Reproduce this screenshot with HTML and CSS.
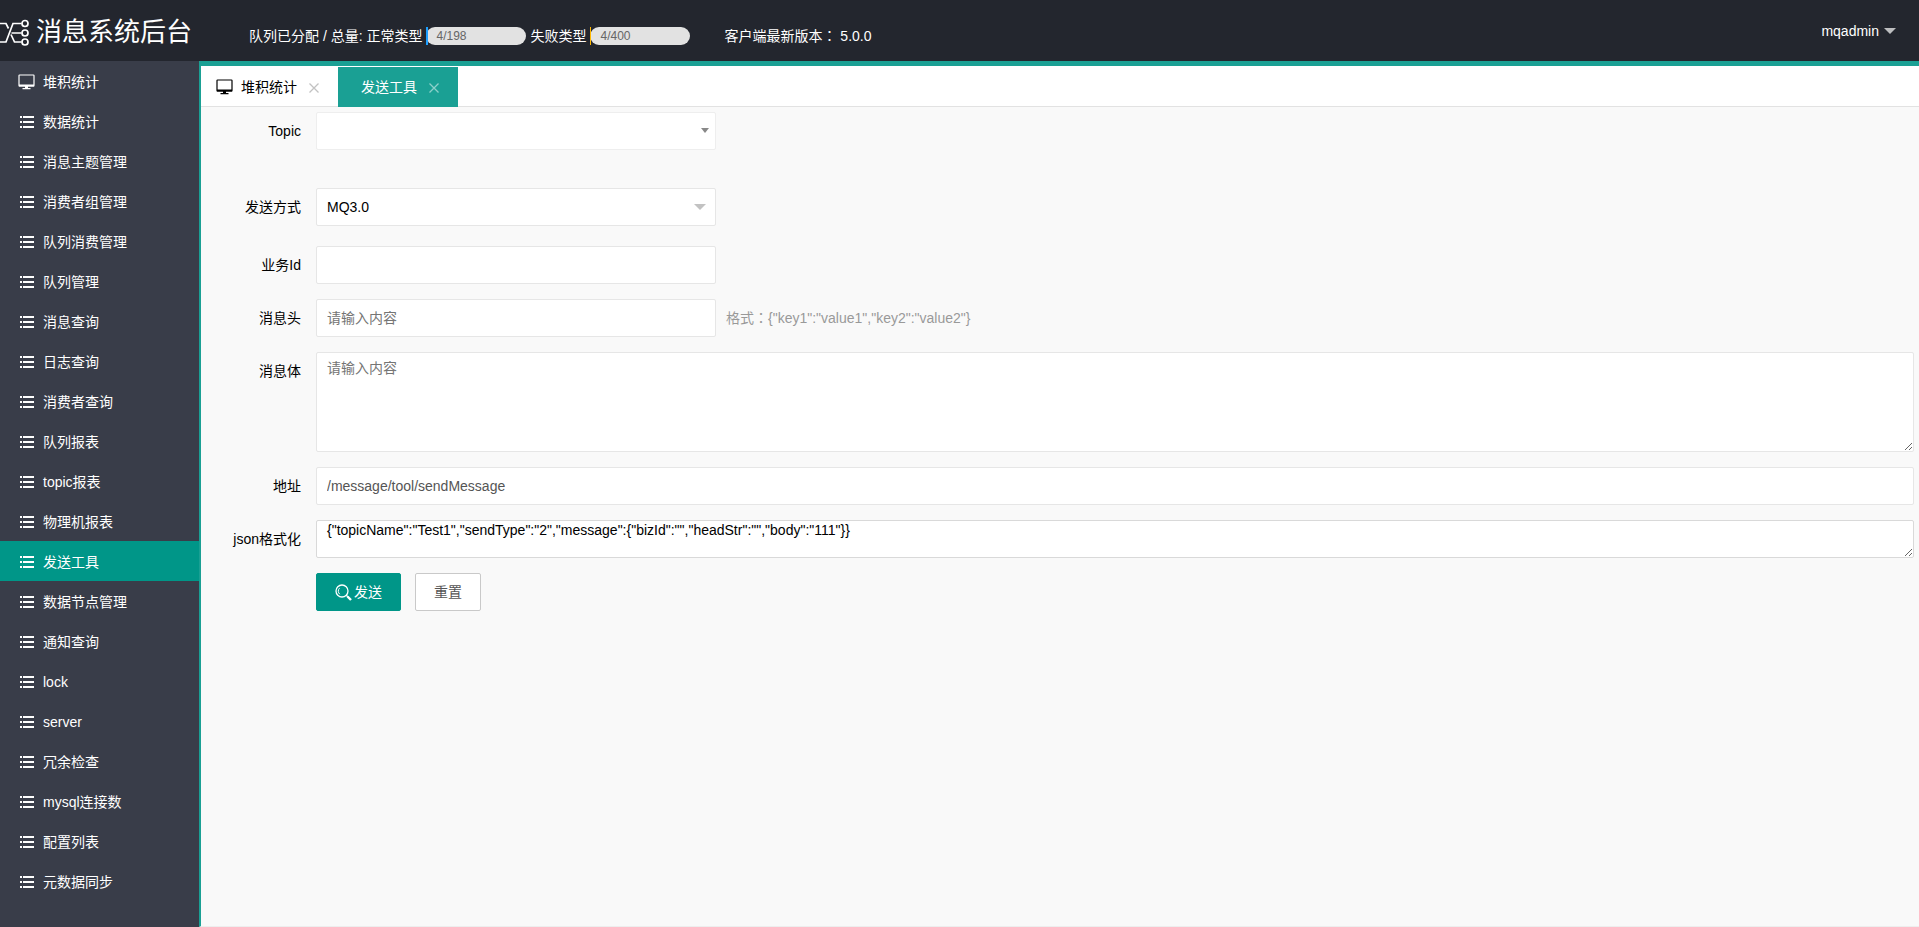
FILE: index.html
```
<!DOCTYPE html>
<html lang="zh-CN">
<head>
<meta charset="utf-8">
<title>消息系统后台</title>
<link rel="stylesheet" href="styles.css">
</head>
<body>
<svg class="sprite" aria-hidden="true">
  <symbol id="i-list" viewBox="0 0 14 12">
    <path d="M0 0h2v2H0zM3 0h11v2H3zM0 5h2v2H0zM3 5h11v2H3zM0 10h2v2H0zM3 10h11v2H3z" fill="currentColor"/>
  </symbol>
  <symbol id="i-monitor" viewBox="0 0 17 16">
    <rect x="1" y="1" width="15" height="11" rx=".6" fill="none" stroke="currentColor" stroke-width="1.200"/>
    <path d="M1 10.500h15v2H1zM7 12.500h3v1.500H7zM4.500 14h8v1.200h-8z" fill="currentColor"/>
  </symbol>
  <symbol id="i-close" viewBox="0 0 10 10">
    <path d="M.5.5l9 9M9.500.5l-9 9" fill="none" stroke="currentColor" stroke-width="1.300"/>
  </symbol>
</svg>

<header class="header">
  <div class="brand">
    <svg class="brand-mark" viewBox="0 0 30 28" aria-hidden="true">
      <g fill="none" stroke="currentColor" stroke-width="1.700">
        <path d="M0 4.500h6l2.500 5M11 15.500l3.500 7.500h7M0 23h6l7-18.500h8.500M11.500 14h10"/>
        <circle cx="25" cy="4.500" r="3"/><circle cx="25" cy="14" r="3"/><circle cx="25" cy="23" r="3"/>
      </g>
    </svg>
    <h1 class="brand-name">消息系统后台</h1>
  </div>
  <div class="stats">
    <span>队列已分配 / 总量: 正常类型</span>
    <div class="meter"><i class="meter-fill meter-blue" style="width:2%"></i><span class="meter-text">4/198</span></div>
    <span>失败类型</span>
    <div class="meter"><i class="meter-fill meter-amber" style="width:1%"></i><span class="meter-text">4/400</span></div>
    <span class="version">客户端最新版本<span class="colon" lang="zh-Hant">：</span> 5.0.0</span>
  </div>
  <button class="user" type="button">mqadmin<i class="caret caret-user"></i></button>
</header>

<div class="shell">
  <nav class="side">
    <a class="side-link" href="#"><svg class="ico-monitor"><use href="#i-monitor"/></svg>堆积统计</a>
    <a class="side-link" href="#"><svg class="ico-list"><use href="#i-list"/></svg>数据统计</a>
    <a class="side-link" href="#"><svg class="ico-list"><use href="#i-list"/></svg>消息主题管理</a>
    <a class="side-link" href="#"><svg class="ico-list"><use href="#i-list"/></svg>消费者组管理</a>
    <a class="side-link" href="#"><svg class="ico-list"><use href="#i-list"/></svg>队列消费管理</a>
    <a class="side-link" href="#"><svg class="ico-list"><use href="#i-list"/></svg>队列管理</a>
    <a class="side-link" href="#"><svg class="ico-list"><use href="#i-list"/></svg>消息查询</a>
    <a class="side-link" href="#"><svg class="ico-list"><use href="#i-list"/></svg>日志查询</a>
    <a class="side-link" href="#"><svg class="ico-list"><use href="#i-list"/></svg>消费者查询</a>
    <a class="side-link" href="#"><svg class="ico-list"><use href="#i-list"/></svg>队列报表</a>
    <a class="side-link" href="#"><svg class="ico-list"><use href="#i-list"/></svg>topic报表</a>
    <a class="side-link" href="#"><svg class="ico-list"><use href="#i-list"/></svg>物理机报表</a>
    <a class="side-link active" href="#" aria-current="page"><svg class="ico-list"><use href="#i-list"/></svg>发送工具</a>
    <a class="side-link" href="#"><svg class="ico-list"><use href="#i-list"/></svg>数据节点管理</a>
    <a class="side-link" href="#"><svg class="ico-list"><use href="#i-list"/></svg>通知查询</a>
    <a class="side-link" href="#"><svg class="ico-list"><use href="#i-list"/></svg>lock</a>
    <a class="side-link" href="#"><svg class="ico-list"><use href="#i-list"/></svg>server</a>
    <a class="side-link" href="#"><svg class="ico-list"><use href="#i-list"/></svg>冗余检查</a>
    <a class="side-link" href="#"><svg class="ico-list"><use href="#i-list"/></svg>mysql连接数</a>
    <a class="side-link" href="#"><svg class="ico-list"><use href="#i-list"/></svg>配置列表</a>
    <a class="side-link" href="#"><svg class="ico-list"><use href="#i-list"/></svg>元数据同步</a>
  </nav>

  <main class="main">
    <div class="tabs">
      <div class="tab tab-home"><svg class="ico-monitor"><use href="#i-monitor"/></svg><a class="tab-link" href="#">堆积统计</a><button class="tab-close" type="button" aria-label="关闭"><svg class="ico-close"><use href="#i-close"/></svg></button></div>
      <div class="tab current"><a class="tab-link" href="#">发送工具</a><button class="tab-close" type="button" aria-label="关闭"><svg class="ico-close"><use href="#i-close"/></svg></button></div>
    </div>

    <form class="form">
      <div class="row row-topic">
        <label class="label" for="topic">Topic</label>
        <div class="pick"><select class="field field-light" id="topic"><option></option></select><i class="caret caret-topic"></i></div>
      </div>
      <div class="row row-type">
        <label class="label" for="type">发送方式</label>
        <div class="pick"><select class="field" id="type"><option>MQ3.0</option></select><i class="caret caret-type"></i></div>
      </div>
      <div class="row">
        <label class="label" for="biz">业务Id</label>
        <input class="field short" id="biz" type="text">
      </div>
      <div class="row">
        <label class="label" for="head">消息头</label>
        <input class="field short" id="head" type="text" placeholder="请输入内容">
        <span class="hint">格式<span class="colon" lang="zh-Hant">：</span>{"key1":"value1","key2":"value2"}</span>
      </div>
      <div class="row">
        <label class="label" for="body">消息体</label>
        <textarea class="field area" id="body" placeholder="请输入内容"></textarea>
      </div>
      <div class="row">
        <label class="label" for="url">地址</label>
        <input class="field muted" id="url" type="text" value="/message/tool/sendMessage">
      </div>
      <div class="row">
        <label class="label" for="json">json格式化</label>
        <textarea class="field json" id="json">{"topicName":"Test1","sendType":"2","message":{"bizId":"","headStr":"","body":"111"}}</textarea>
      </div>
      <div class="row actions">
        <button class="btn btn-send" type="button">
          <svg class="ico-search" viewBox="0 0 17 17" aria-hidden="true"><g fill="none" stroke="currentColor"><circle cx="7" cy="7" r="6" stroke-width="1.300"/><path d="M4.500 4.200a4 4 0 0 0 .3 6" stroke-width="1"/><path d="M11.300 11.300l1.500 1.500" stroke-width="1.300"/><path d="M12.500 12.500l3.500 3.500" stroke-width="2.400"/></g></svg>发送
        </button>
        <button class="btn btn-reset" type="reset">重置</button>
      </div>
    </form>
  </main>
</div>
</body>
</html>
```
FILE: styles.css
```
* { box-sizing: border-box; }

body {
  margin: 0;
  min-height: 100vh;
  display: flex;
  flex-direction: column;
  font: 14px/22px "Liberation Sans", "Noto Sans CJK SC", sans-serif;
  color: #000;
  background: #f9f9f9;
}

a { color: inherit; text-decoration: none; }
button, input, select, textarea { font: inherit; color: inherit; margin: 0; }
.sprite { display: none; }
.colon { font-family: "Noto Sans CJK TC", sans-serif; line-height: 1; }

/* Header */
.header {
  display: flex;
  height: 61px;
  color: #fff;
  background: #23262e;
}
.brand { display: flex; width: 249px; padding-top: 11px; }
.brand-mark { width: 30px; height: 28px; margin: 8px 6px 0 0; }
.brand-name { margin: 0; font-size: 26px; line-height: 42px; font-weight: 400; white-space: nowrap; }
.stats { display: flex; flex: 1; gap: 4px; align-items: center; padding-top: 11px; white-space: nowrap; }
.version { margin-left: 30px; }

.meter {
  position: relative;
  width: 100px;
  height: 18px;
  border-radius: 9px;
  background: #e2e2e2;
}
.meter-fill { position: absolute; left: 0; top: 0; height: 100%; }
.meter-blue { background: #1e9fff; }
.meter-amber { background: #ffb800; }
.meter-text { display: block; padding-left: 10px; font-size: 12px; line-height: 18px; color: #666; }

.user {
  display: flex;
  gap: 5px;
  align-items: center;
  padding: 0 23px 0 20px;
  border: 0;
  background: none;
}

.caret { border-style: solid; border-color: transparent; border-bottom-width: 0; }
.caret-user { border-width: 6px 6px 0; border-top-color: #bdbec0; }
.caret-topic { border-width: 5px 4px 0; border-top-color: #888; right: 7px; top: 16px; }
.caret-type { border-width: 6px 6px 0; border-top-color: #c2c2c2; right: 10px; top: 16px; }

/* Sidebar */
.shell { display: flex; flex: 1; }
.side { width: 199px; color: #fff; background: #393d49; }
.side-link {
  display: flex;
  align-items: center;
  gap: 9px;
  height: 40px;
  padding: 1px 0 0 20px;
}
.side-link.active { background: #009688; }
.ico-list { width: 14px; height: 12px; }
.ico-monitor { width: 17px; height: 16px; }
.side-link .ico-monitor { margin: 0 -1px 0 -2px; }

/* Tabs */
.main {
  flex: 1;
  min-width: 0;
  border-top: 5px solid #1aa094;
  border-left: 2px solid #1aa094;
  border-bottom: 1px solid #eee;
}
.tabs {
  display: flex;
  height: 41px;
  padding-top: 1px;
  border-bottom: 1px solid #e2e2e2;
  background: #fff;
}
.tab { display: flex; align-items: center; height: 40px; padding: 0 19px 0 23px; }
.tab-home { padding-left: 15px; }
.tab-home .ico-monitor { margin-right: 8px; }
.tab.current { color: #fff; background: #1aa094; }
.tab-close { display: flex; margin: 2px 0 0 12px; padding: 0; border: 0; background: none; color: #c2c2c2; }
.current .tab-close { color: #8dd0ca; }
.ico-close { width: 10px; height: 10px; }

/* Form */
.form { padding: 5px 5px 0 0; }
.row { display: flex; margin-bottom: 15px; }
.row-topic { margin-bottom: 38px; }
.row-type { margin-bottom: 20px; }
.label { flex: none; width: 115px; padding: 8px 15px 8px 0; text-align: right; white-space: nowrap; }
.field {
  display: block;
  width: 100%;
  height: 38px;
  padding: 0 10px;
  border: 1px solid #e6e6e6;
  border-radius: 2px;
  outline: 0;
  background: #fff;
}
.field::placeholder { color: #757575; }
select.field { appearance: none; }
.field-light { border-color: #eee; }
.short, .pick { flex: none; width: 400px; }
.pick { position: relative; }
.pick .caret { position: absolute; pointer-events: none; }
.muted { color: #555; }
.hint { height: 38px; padding: 8px 10px; color: #999; white-space: nowrap; }
.area { height: 100px; padding: 6px 10px; line-height: 18px; resize: vertical; }
.json { padding: 1px 10px; line-height: 16px; border-color: #d9d9d9; resize: vertical; }

.actions { gap: 14px; padding-left: 115px; }
.btn {
  display: flex;
  gap: 2px;
  align-items: center;
  justify-content: center;
  height: 38px;
  padding: 0 18px;
  border: 1px solid #c9c9c9;
  border-radius: 2px;
  color: #555;
  background: #fff;
}
.btn-send { border-color: #009688; color: #fff; background: #009688; }
.ico-search { width: 17px; height: 17px; }
```
